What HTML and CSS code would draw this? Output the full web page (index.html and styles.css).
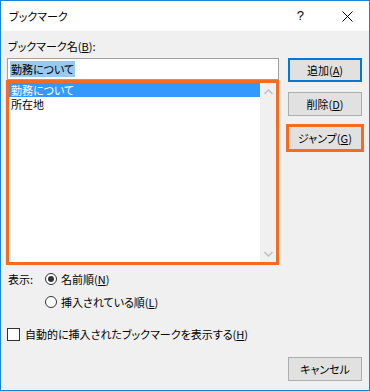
FILE: index.html
```html
<!DOCTYPE html>
<html lang="ja">
<head>
    <meta charset="UTF-8">
    <meta name="viewport" content="width=device-width, initial-scale=1.0">
    <title>ブックマーク</title>
    <link rel="stylesheet" href="styles.css">
</head>
<body>

    <div class="window">
        <div class="titlebar">
            <span class="title">ブックマーク</span>
            <span class="help">?</span>
            <span class="close">
                <svg width="11" height="11" viewBox="0 0 11 11">
                    <path d="M0.5 0.5 L10.5 10.5 M10.5 0.5 L0.5 10.5" stroke="#000" stroke-width="1" fill="none"/>
                </svg>
            </span>
        </div>

        <div class="dialog">
            <div class="name-label">ブックマーク名(<u>B</u>):</div>

            <div class="main">
                <div class="left">
                    <div class="textbox"><span class="sel">勤務について</span></div>
                    <div class="listbox">
                        <div class="items">
                            <div class="item selected">勤務について</div>
                            <div class="item">所在地</div>
                        </div>
                        <div class="scrollbar">
                            <svg width="9" height="6" viewBox="0 0 9 6">
                                <path d="M0.5 5 L4.5 1 L8.5 5" stroke="#c2c2c2" stroke-width="1.6" fill="none"/>
                            </svg>
                            <svg width="9" height="6" viewBox="0 0 9 6">
                                <path d="M0.5 1 L4.5 5 L8.5 1" stroke="#c2c2c2" stroke-width="1.6" fill="none"/>
                            </svg>
                        </div>
                    </div>
                </div>
                <div class="buttons">
                    <button class="button default">追加(<u>A</u>)</button>
                    <button class="button">削除(<u>D</u>)</button>
                    <button class="button marked">ジャンプ(<u>G</u>)</button>
                </div>
            </div>

            <div class="display">
                <span class="display-label">表示:</span>
                <div class="radios">
                    <label class="radio-row"><span class="radio checked"></span>名前順(<u>N</u>)</label>
                    <label class="radio-row"><span class="radio"></span>挿入されている順(<u>L</u>)</label>
                </div>
            </div>

            <label class="check-row"><span class="checkbox"></span>自動的に挿入されたブックマークを表示する(<u>H</u>)</label>

            <div class="footer">
                <button class="button">キャンセル</button>
            </div>
        </div>
    </div>

</body>
</html>
```

FILE: styles.css
```css
body {
    margin: 0;
    font-family: "Noto Sans CJK JP", "Noto Sans", sans-serif;
    font-size: 11px;
    font-feature-settings: "palt";
    color: #000;
    background-color: #f0f0f0;
}
u {
    text-decoration-thickness: 1px;
    text-underline-offset: 1px;
}
.window {
    width: 370px;
    height: 391px;
    box-sizing: border-box;
    border: 1px solid #1883d7;
    display: flex;
    flex-direction: column;
}
.titlebar {
    height: 30px;
    flex: none;
    background-color: #ffffff;
    display: flex;
    align-items: center;
    padding-left: 8px;
    line-height: 16px;
}
.title {
    flex: 1;
}
.help {
    font-family: "Liberation Sans", sans-serif;
    font-size: 13px;
    margin-right: 38px;
}
.close {
    display: flex;
    margin-right: 16px;
    margin-top: 1px;
}
.dialog {
    flex: 1;
    background-color: #f0f0f0;
    padding: 7px 7px 0 5px;
    line-height: 16px;
}
.name-label {
    padding-left: 2px;
    margin-bottom: 4px;
}
.main {
    display: flex;
    gap: 9px;
}
.left {
    width: 273px;
}
.textbox {
    margin-left: 1px;
    height: 22px;
    box-sizing: border-box;
    border: 1px solid #a0a0a0;
    background-color: #ffffff;
    padding: 2px 0 0 2px;
}
.sel {
    background-color: #99c9ef;
    padding: 0 1px;
}
.listbox {
    height: 185px;
    box-sizing: border-box;
    border: 3px solid #f36c21;
    background-color: #ffffff;
    display: flex;
}
.items {
    flex: 1;
}
.item {
    height: 14px;
    line-height: 14px;
    padding-left: 2px;
}
.item.selected {
    background-color: #3399ff;
    color: #ffffff;
}
.scrollbar {
    width: 16px;
    background-color: #f0f0f0;
    display: flex;
    flex-direction: column;
    justify-content: space-between;
    align-items: center;
    padding: 6px 0 5px;
}
.buttons {
    display: flex;
    flex-direction: column;
    gap: 10px;
}
.button {
    width: 74px;
    height: 24px;
    box-sizing: border-box;
    background-color: #e1e1e1;
    border: 1px solid #adadad;
    font-family: inherit;
    font-size: 11px;
    font-feature-settings: "palt";
    padding: 0;
    color: #000;
}
.button.default {
    border: 2px solid #0078d7;
}
.button.marked {
    outline: 3px solid #f36c21;
    outline-offset: -1px;
}
.display {
    display: flex;
    margin-top: 6px;
    padding-left: 2px;
}
.display-label {
    width: 37px;
}
.radios {
    display: flex;
    flex-direction: column;
    gap: 7px;
}
.radio-row,
.check-row {
    display: flex;
    align-items: center;
    height: 16px;
}
.radio {
    width: 12px;
    height: 12px;
    box-sizing: border-box;
    border: 1px solid #333;
    border-radius: 50%;
    background-color: #ffffff;
    margin-right: 4px;
    display: flex;
    align-items: center;
    justify-content: center;
}
.radio.checked::after {
    content: "";
    width: 6px;
    height: 6px;
    border-radius: 50%;
    background-color: #333;
}
.check-row {
    margin-top: 16px;
    margin-left: 1px;
}
.checkbox {
    width: 13px;
    height: 13px;
    box-sizing: border-box;
    border: 1px solid #333;
    background-color: #ffffff;
    margin-right: 5px;
}
.footer {
    display: flex;
    justify-content: flex-end;
    margin-top: 15px;
}
```
